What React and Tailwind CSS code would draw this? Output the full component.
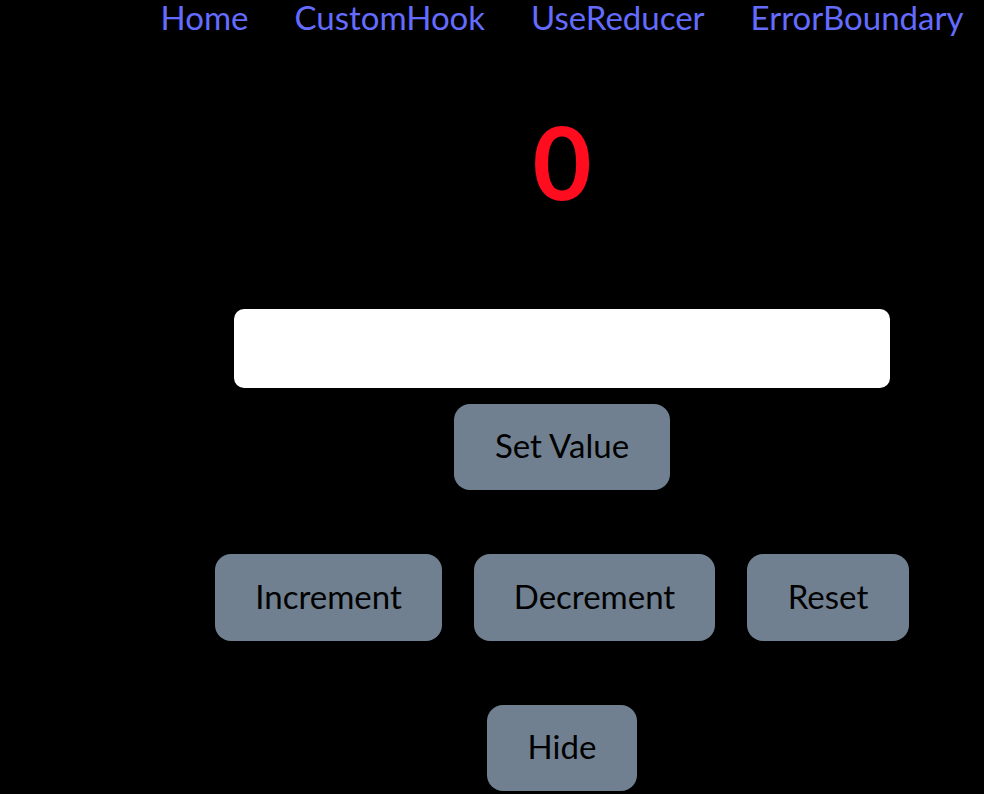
import { useState } from "react";

const links = ["Home", "CustomHook", "UseReducer", "ErrorBoundary"];

function Button({ className = "", ...props }) {
  return (
    <button
      type="button"
      className={`min-h-[86px] rounded-2xl bg-[#708090] pb-1 text-[33px] leading-[44px] text-black ${className}`}
      {...props}
    />
  );
}

export default function App() {
  const [count, setCount] = useState(0);
  const [value, setValue] = useState("");
  const [visible, setVisible] = useState(true);

  return (
    <div className="min-h-screen bg-black pl-[140px] font-[Lato,sans-serif] text-[33px]">
      <nav className="flex justify-center gap-[46px] text-[#646cff]">
        {links.map((name) => (
          <a key={name} href={`#${name}`} className="leading-[34px]">
            {name}
          </a>
        ))}
      </nav>
      <main className="flex flex-col items-center">
        <h1 className="mt-[67px] h-[120px] text-[102px] font-bold leading-[120px] text-[#ff0d1f]">
          {visible ? count : ""}
        </h1>
        <input
          type="number"
          aria-label="Value"
          value={value}
          onChange={(e) => setValue(e.target.value)}
          className="mt-[88px] h-[79px] w-[656px] max-w-full rounded-[10px] bg-white px-4 text-black"
        />
        <Button className="mt-4 w-[216px]" onClick={() => setCount(Number(value))}>
          Set Value
        </Button>
        <div className="mt-16 flex min-h-[87px] gap-8">
          <Button className="w-[227px]" onClick={() => setCount(count + 1)}>
            Increment
          </Button>
          <Button className="w-[241px]" onClick={() => setCount(count - 1)}>
            Decrement
          </Button>
          <Button className="w-[162px]" onClick={() => setCount(0)}>
            Reset
          </Button>
        </div>
        <Button className="mt-16 w-[150px]" onClick={() => setVisible(!visible)}>
          {visible ? "Hide" : "Show"}
        </Button>
      </main>
    </div>
  );
}
